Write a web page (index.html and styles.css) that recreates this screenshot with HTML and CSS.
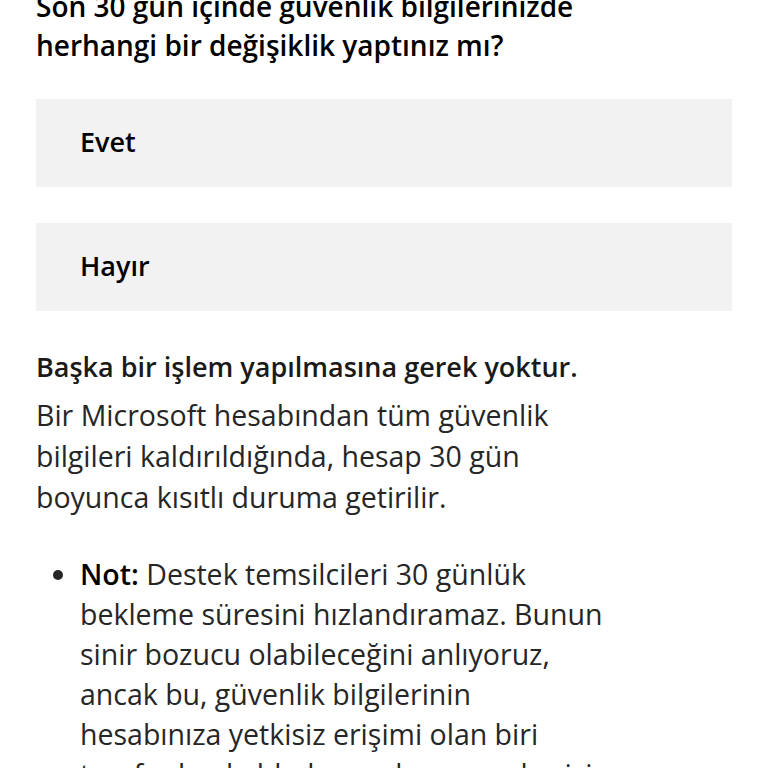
FILE: index.html
```html
<!DOCTYPE html>
<html>
	<head>
		<meta charset="UTF-8">
		<meta name="viewport" content="width=device-width,initial-scale=1" />
		<title>Güvenlik bilgileri</title>
		<link rel="stylesheet" href="styles.css">
	</head>
	<body>
		<div class="page">
			<h1 class="question">Son 30 gün içinde güvenlik bilgilerinizde herhangi bir değişiklik yaptınız mı?</h1>

			<div class="choices">
				<div class="choice">Evet</div>
				<div class="choice">Hayır</div>
			</div>

			<h2 class="answer-title">Başka bir işlem yapılmasına gerek yoktur.</h2>
			<p class="answer-text">Bir Microsoft hesabından tüm güvenlik bilgileri kaldırıldığında, hesap 30 gün boyunca kısıtlı duruma getirilir.</p>

			<ul class="notes">
				<li><b>Not:</b> Destek temsilcileri 30 günlük bekleme süresini hızlandıramaz. Bunun sinir bozucu olabileceğini anlıyoruz, ancak bu, güvenlik bilgilerinin hesabınıza yetkisiz erişimi olan biri tarafından kaldırılması durumunda sizi korumak için yapılır.</li>
			</ul>
		</div>
	</body>
</html>
```

FILE: styles.css
```css
* {
	margin: 0;
	padding: 0;
}

body {
	font-family: "Open Sans", "Noto Sans", sans-serif;
	background: #FFFFFF;
	color: #262626;
	overflow: hidden;
}

.page {
	padding: 0 36px;
	width: 696px;
}

.question,
.answer-title,
.answer-text {
	max-width: 570px;
}

.question {
	margin-top: -13px;
	font-size: 28px;
	line-height: 39px;
	font-weight: 600;
	color: #000000;
}

.choices {
	margin-top: 34px;
	display: flex;
	flex-direction: column;
	gap: 36px;
}

.choice {
	height: 88px;
	line-height: 86px;
	padding: 0 44px;
	background: #F2F2F2;
	font-size: 27px;
	font-weight: 600;
	color: #000000;
}

.answer-title {
	margin-top: 36px;
	font-size: 27px;
	line-height: 40px;
	font-weight: 600;
	color: #1A1A1A;
}

.answer-text {
	margin-top: 8px;
	font-size: 28.5px;
	line-height: 41px;
}

.notes {
	margin-top: 36px;
	padding-left: 44px;
	max-width: 526px;
	list-style: disc;
}

.notes li {
	font-size: 28.5px;
	line-height: 40px;
}

.notes b {
	font-weight: 600;
	color: #000000;
}
```
